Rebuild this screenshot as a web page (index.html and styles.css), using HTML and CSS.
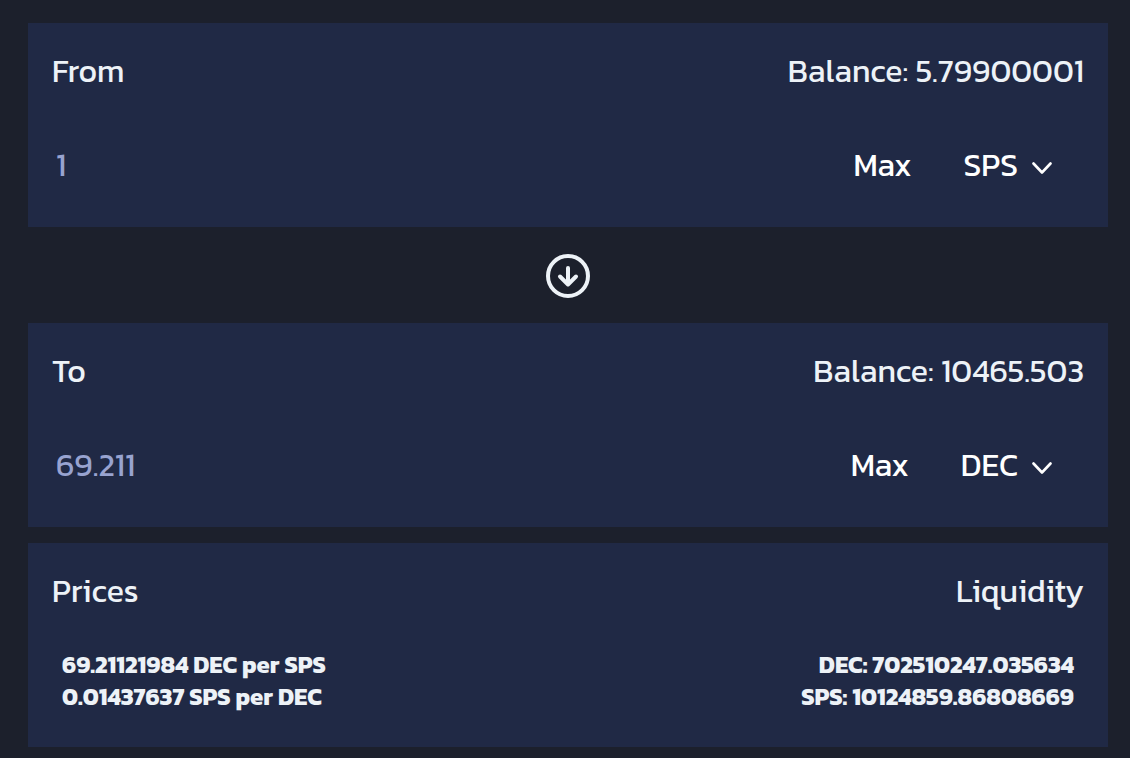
FILE: index.html
```html
<!DOCTYPE html>
<html lang="en">
<head>
  <meta charset="UTF-8" />
  <title>Swap</title>
  <meta name="viewport" content="width=device-width, initial-scale=1.0" />
  <link rel="stylesheet" href="styles.css">
</head>
<body>
  <main class="swap">
    <section class="card">
      <div class="card-header">
        <label for="from-amount">From</label>
        <span>Balance: 5.79900001</span>
      </div>
      <div class="card-row">
        <input class="amount" id="from-amount" type="text" inputmode="decimal" placeholder="1" />
        <button class="max" type="button">Max</button>
        <div class="token">
          <select class="token-select" aria-label="From token">
            <option selected>SPS</option>
            <option>DEC</option>
          </select>
          <svg class="chevron" viewBox="0 0 20 12" aria-hidden="true"><path d="M1.5 1.5 L10 10.5 L18.5 1.5" /></svg>
        </div>
      </div>
    </section>

    <button class="switch" type="button" aria-label="Switch tokens">
      <svg class="switch-icon" viewBox="0 0 44 44" aria-hidden="true">
        <circle cx="22" cy="22" r="20" />
        <path d="M22 14 V30 M14 22.5 L22 30.5 L30 22.5" />
      </svg>
    </button>

    <section class="card">
      <div class="card-header">
        <label for="to-amount">To</label>
        <span>Balance: 10465.503</span>
      </div>
      <div class="card-row">
        <input class="amount" id="to-amount" type="text" inputmode="decimal" placeholder="69.211" />
        <button class="max" type="button">Max</button>
        <div class="token">
          <select class="token-select" aria-label="To token">
            <option>SPS</option>
            <option selected>DEC</option>
          </select>
          <svg class="chevron" viewBox="0 0 20 12" aria-hidden="true"><path d="M1.5 1.5 L10 10.5 L18.5 1.5" /></svg>
        </div>
      </div>
    </section>

    <section class="card card-info">
      <div class="card-header">
        <span>Prices</span>
        <span>Liquidity</span>
      </div>
      <div class="details">
        <div>
          <div>69.21121984 DEC per SPS</div>
          <div>0.01437637 SPS per DEC</div>
        </div>
        <div class="details-right">
          <div>DEC: 702510247.035634</div>
          <div>SPS: 10124859.86808669</div>
        </div>
      </div>
    </section>
  </main>
</body>
</html>
```
FILE: styles.css
```css
* {
  box-sizing: border-box;
}

body {
  margin: 0;
  background: #1c202c;
  color: #edf2f7;
  font-family: Kanit, "Noto Sans", sans-serif;
  font-size: 32px;
}

.swap {
  display: flex;
  flex-direction: column;
  padding: 23px 22px 11px 28px;
}

.card {
  display: flex;
  flex-direction: column;
  gap: 34px;
  padding: 24px;
  background: #202945;
}

.card-info {
  margin-top: 16px;
}

.card-header {
  display: flex;
  justify-content: space-between;
  line-height: 48px;
}

.card-row {
  display: flex;
  align-items: center;
  height: 74px;
  padding-bottom: 2px;
}

.amount {
  flex: 1;
  min-width: 0;
  padding: 0 4px;
  border: none;
  outline: none;
  background: none;
  color: #fff;
  font: inherit;
}

.amount::placeholder {
  color: #98a3d0;
  opacity: 1;
}

.max {
  padding: 0 24px;
  border: none;
  background: none;
  color: #fff;
  font: inherit;
  cursor: pointer;
}

.token {
  position: relative;
  display: flex;
  align-items: center;
  margin: 0 32px 0 28px;
}

.token-select {
  appearance: none;
  field-sizing: content;
  padding: 0 34px 0 0;
  border: none;
  background: none;
  color: #fff;
  font: inherit;
  cursor: pointer;
}

.token-select option {
  background: #202945;
}

/* sits over the right padding of the select */
.chevron {
  position: absolute;
  right: 0;
  width: 20px;
  height: 12px;
  margin-top: 6px;
  fill: none;
  stroke: #fff;
  stroke-width: 2.6;
  stroke-linecap: round;
  stroke-linejoin: round;
  pointer-events: none;
}

.switch {
  display: flex;
  align-self: center;
  margin: 27px 0 25px;
  padding: 0;
  border: none;
  background: none;
  cursor: pointer;
}

.switch-icon {
  width: 44px;
  height: 44px;
  fill: none;
  stroke: #edf2f7;
  stroke-width: 4;
  stroke-linecap: round;
  stroke-linejoin: round;
}

.details {
  display: flex;
  justify-content: space-between;
  padding: 0 10px 10px;
  font-size: 24px;
  font-weight: 700;
  line-height: 32px;
}

.details-right {
  text-align: right;
}
```
